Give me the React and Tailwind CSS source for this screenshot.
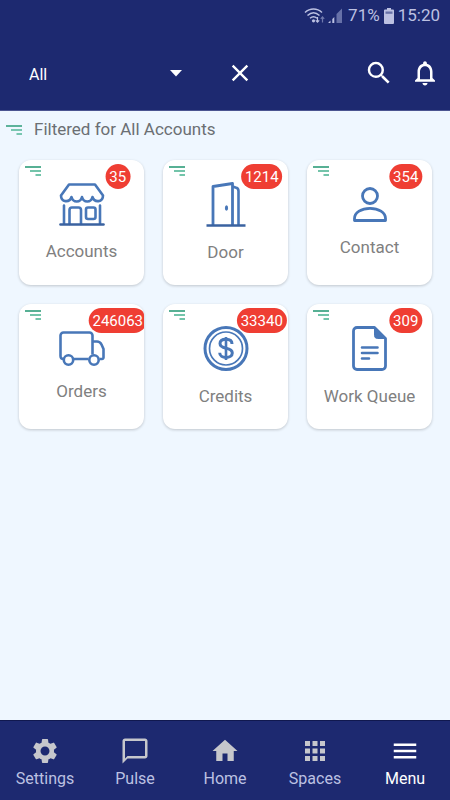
import React from 'react';
import {
  MdApps,
  MdChatBubbleOutline,
  MdClose,
  MdHome,
  MdMenu,
  MdNotificationsNone,
  MdSearch,
  MdSettings
} from 'react-icons/md';

const FilterIcon = ({ className }) => (
  <svg viewBox="0 0 16 10" className={`w-4 h-[10px] ${className || ''}`} fill="none" strokeWidth="1.400" aria-hidden="true">
    <path d="M0 1h16" stroke="#1f9670" />
    <path d="M5 5h11" stroke="#45b08e" />
    <path d="M10.500 9h5.500" stroke="#45b08e" />
  </svg>
);

const AccountsIcon = () => (
  <svg width="46" height="43" viewBox="0 0 46 43" fill="none" stroke="#4877b8" strokeWidth="2.600" strokeLinejoin="round" strokeLinecap="round" aria-hidden="true">
    <path d="M10 1.500h26L44 12.500c0 7-8.500 7.500-10.500 1.500-1.500 6-9 6-10.500 0-1.500 6-9 6-10.500 0C10.500 20 2 19.500 2 12.500z" />
    <path d="M5 22.500v18M41 22.500v18" />
    <path d="M10.500 41V27a2.500 2.500 0 0 1 2.500-2.500h6.500A2.500 2.500 0 0 1 22 27v14" />
    <rect x="27" y="24.500" width="9.500" height="11.500" rx="2" />
    <path d="M1.500 41.500h43" stroke="#3a62a0" />
  </svg>
);

const DoorIcon = () => (
  <svg width="42" height="45" viewBox="0 0 42 45" fill="none" stroke="#4877b8" strokeWidth="2.800" strokeLinejoin="round" aria-hidden="true">
    <path d="M8 43V4.500L27.500 1.500V43" />
    <path d="M27.500 4.500l3 1a3.500 3.500 0 0 1 3 3.500V43" strokeWidth="2.600" />
    <ellipse cx="21.500" cy="26" rx="1.600" ry="2.800" fill="#4877b8" stroke="none" />
    <path d="M1.500 43.500h39" stroke="#3a62a0" strokeWidth="2.600" />
  </svg>
);

const ContactIcon = () => (
  <svg width="34" height="35" viewBox="0 0 34 35" fill="none" stroke="#4877b8" strokeWidth="2.800" strokeLinejoin="round" aria-hidden="true">
    <circle cx="17" cy="9" r="7.500" />
    <path d="M1.500 33.500v-2c0-6 7-10.200 15.500-10.200s15.500 4.200 15.500 10.200v2z" />
  </svg>
);

const OrdersIcon = () => (
  <svg width="46" height="35" viewBox="0 0 46 35" fill="none" stroke="#4877b8" strokeWidth="2.600" strokeLinejoin="round" aria-hidden="true">
    <path d="M4.500 28C2.500 28 1.500 27 1.500 25V4.500A3 3 0 0 1 4.500 1.500h26a3 3 0 0 1 3 3v19M14.500 28h15" />
    <path d="M33.500 10.500h4.500c2.500 0 3.500 1 4.500 3l2 4.500v8.500a1.500 1.500 0 0 1-1.500 1.500h-2.500" />
    <circle cx="9.500" cy="29" r="4.700" />
    <circle cx="35" cy="29" r="4.700" />
  </svg>
);

const CreditsIcon = () => (
  <svg width="46" height="45" viewBox="0 0 46 45" fill="none" stroke="#4877b8" aria-hidden="true">
    <circle cx="23" cy="22.500" r="21" strokeWidth="3" />
    <circle cx="23" cy="22.500" r="16.500" strokeWidth="1.700" />
    <path d="M29 18c0-3-2.500-4.700-6-4.700s-6 1.500-6 4.300 2.300 3.900 6 4.600 6.300 1.700 6.300 4.700-2.900 4.500-6.300 4.500-6.300-1.600-6.300-4.700" strokeWidth="3" />
    <path d="M23 11v23" strokeWidth="2.600" />
  </svg>
);

const WorkQueueIcon = () => (
  <svg width="35" height="45" viewBox="0 0 35 45" fill="none" stroke="#4877b8" strokeWidth="2.800" strokeLinejoin="round" aria-hidden="true">
    <path d="M22.500 1.500H5A3.500 3.500 0 0 0 1.500 5v35A3.500 3.500 0 0 0 5 43.500h25a3.500 3.500 0 0 0 3.500-3.500V12.500z" />
    <path d="M22.500 1.500v8a3 3 0 0 0 3 3h8z" fill="#4877b8" strokeWidth="1" />
    <path d="M10 21.500h15.500M10 27h15.500M10 32.500h7" strokeLinecap="round" strokeWidth="2.600" />
  </svg>
);

const tiles = [
  { label: 'Accounts', count: 35, icon: AccountsIcon },
  { label: 'Door', count: 1214, icon: DoorIcon },
  { label: 'Contact', count: 354, icon: ContactIcon },
  { label: 'Orders', count: 246063, icon: OrdersIcon },
  { label: 'Credits', count: 33340, icon: CreditsIcon },
  { label: 'Work Queue', count: 309, icon: WorkQueueIcon }
];

const navItems = [
  { label: 'Settings', icon: MdSettings },
  { label: 'Pulse', icon: MdChatBubbleOutline },
  { label: 'Home', icon: MdHome },
  { label: 'Spaces', icon: MdApps },
  { label: 'Menu', icon: MdMenu, active: true }
];

const StatusBar = () => (
  <div className="flex items-center justify-end h-8 pr-[10px] text-[17px] text-[#bcc1e2]">
    <svg width="40" height="18" viewBox="0 0 40 18" fill="none" aria-hidden="true">
      <g stroke="#bcc1e2" strokeWidth="1.500">
        <path d="M1 5.500c5-4.700 12-4.700 17 0" />
        <path d="M3.500 8.500c3.800-3.500 8.200-3.500 12 0" />
        <path d="M6 11.300c2.200-2 4.800-2 7 0" />
      </g>
      <circle cx="9.500" cy="13.800" r="1.600" fill="#bcc1e2" />
      <path d="M13.500 10v5M11.800 13.300l1.700 1.900 1.700-1.900" stroke="#bcc1e2" strokeWidth="1.200" />
      <path d="M18.500 15.500V10M16.800 11.800l1.700-1.900 1.700 1.900" stroke="#7079ad" strokeWidth="1.200" />
      <path d="M24 16l2.500-2.500V16zM28.300 16v-4l2-2v6z" fill="#bcc1e2" />
      <path d="M32.500 16V7L38 1.500V16z" fill="#6771a8" />
    </svg>
    <span className="ml-1">71%</span>
    <svg width="10" height="16" viewBox="0 0 10 16" className="mx-1" aria-hidden="true">
      <path d="M3 0h4v1.500h2a1 1 0 0 1 1 1V15a1 1 0 0 1-1 1H1a1 1 0 0 1-1-1V2.500a1 1 0 0 1 1-1h2z" fill="#bcc1e2" />
      <path d="M1.500 3.500h7v2.300h-7z" fill="#6771a8" />
    </svg>
    <span>15:20</span>
  </div>
);

const Header = () => (
  <header className="bg-[#1d2970] border-b border-[#4b5591]">
    <StatusBar />
    <div className="flex items-center h-[78px] pt-1 pl-[29px] pr-[10px] text-white">
      <div className="flex items-center w-[153px]">
        <select
          aria-label="Account filter"
          defaultValue="All"
          className="appearance-none grow h-10 pt-[3px] bg-transparent text-base text-white outline-none"
        >
          <option value="All">All</option>
        </select>
        <svg width="12" height="7" viewBox="0 0 12 7" className="shrink-0 pointer-events-none" aria-hidden="true">
          <path d="M0 0h12L6 6.500z" fill="#fff" />
        </svg>
      </div>
      <button type="button" aria-label="Clear filter" className="ml-11">
        <MdClose size={28} />
      </button>
      <div className="flex items-center gap-4 ml-auto">
        <button type="button" aria-label="Search">
          <MdSearch size={30} />
        </button>
        <button type="button" aria-label="Notifications">
          <MdNotificationsNone size={30} />
        </button>
      </div>
    </div>
  </header>
);

const Tile = ({ label, count, icon: Icon }) => (
  <button
    type="button"
    className="relative flex flex-col items-center justify-center gap-[15px] h-[125px] pb-[2px] overflow-hidden bg-white rounded-xl shadow-[0_1px_3px_rgba(0,0,0,0.2)]"
  >
    <FilterIcon className="absolute left-[6px] top-[6px]" />
    <span className="absolute left-[79%] top-1 -translate-x-1/2 h-[25px] px-1 rounded-full bg-[#ef3e33] text-[15px] leading-[26px] text-white whitespace-nowrap">
      {count}
    </span>
    <Icon />
    <span className="text-[17px] leading-5 text-[#808080]">{label}</span>
  </button>
);

const BottomNav = () => (
  <nav className="grid grid-cols-5 h-20 bg-[#1d2970] border-t border-[#10184f]">
    {navItems.map((item) => {
      const Icon = item.icon;
      return (
        <a
          key={item.label}
          href="#"
          aria-current={item.active ? 'page' : undefined}
          className={`flex flex-col items-center justify-center text-base leading-5 ${
            item.active ? 'text-white' : 'text-[#bcc1e2]'
          }`}
        >
          <Icon size={30} className={`mt-1 mb-[3px] ${item.active ? 'text-white' : 'text-[#c6c7cc]'}`} />
          {item.label}
        </a>
      );
    })}
  </nav>
);

const App = () => {
  return (
    <div className="flex flex-col min-h-screen bg-[#eff7ff] font-['Roboto',sans-serif]">
      <Header />
      <main className="grow">
        <div className="flex items-center gap-3 h-[38px] pl-[6px] text-[17px] text-[#6b6f73]">
          <FilterIcon />
          <h1>Filtered for All Accounts</h1>
        </div>
        <div className="grid grid-cols-3 gap-[19px] pt-[11px] pl-[19px] pr-[18px]">
          {tiles.map((tile) => (
            <Tile key={tile.label} {...tile} />
          ))}
        </div>
      </main>
      <BottomNav />
    </div>
  );
};

export default App;
